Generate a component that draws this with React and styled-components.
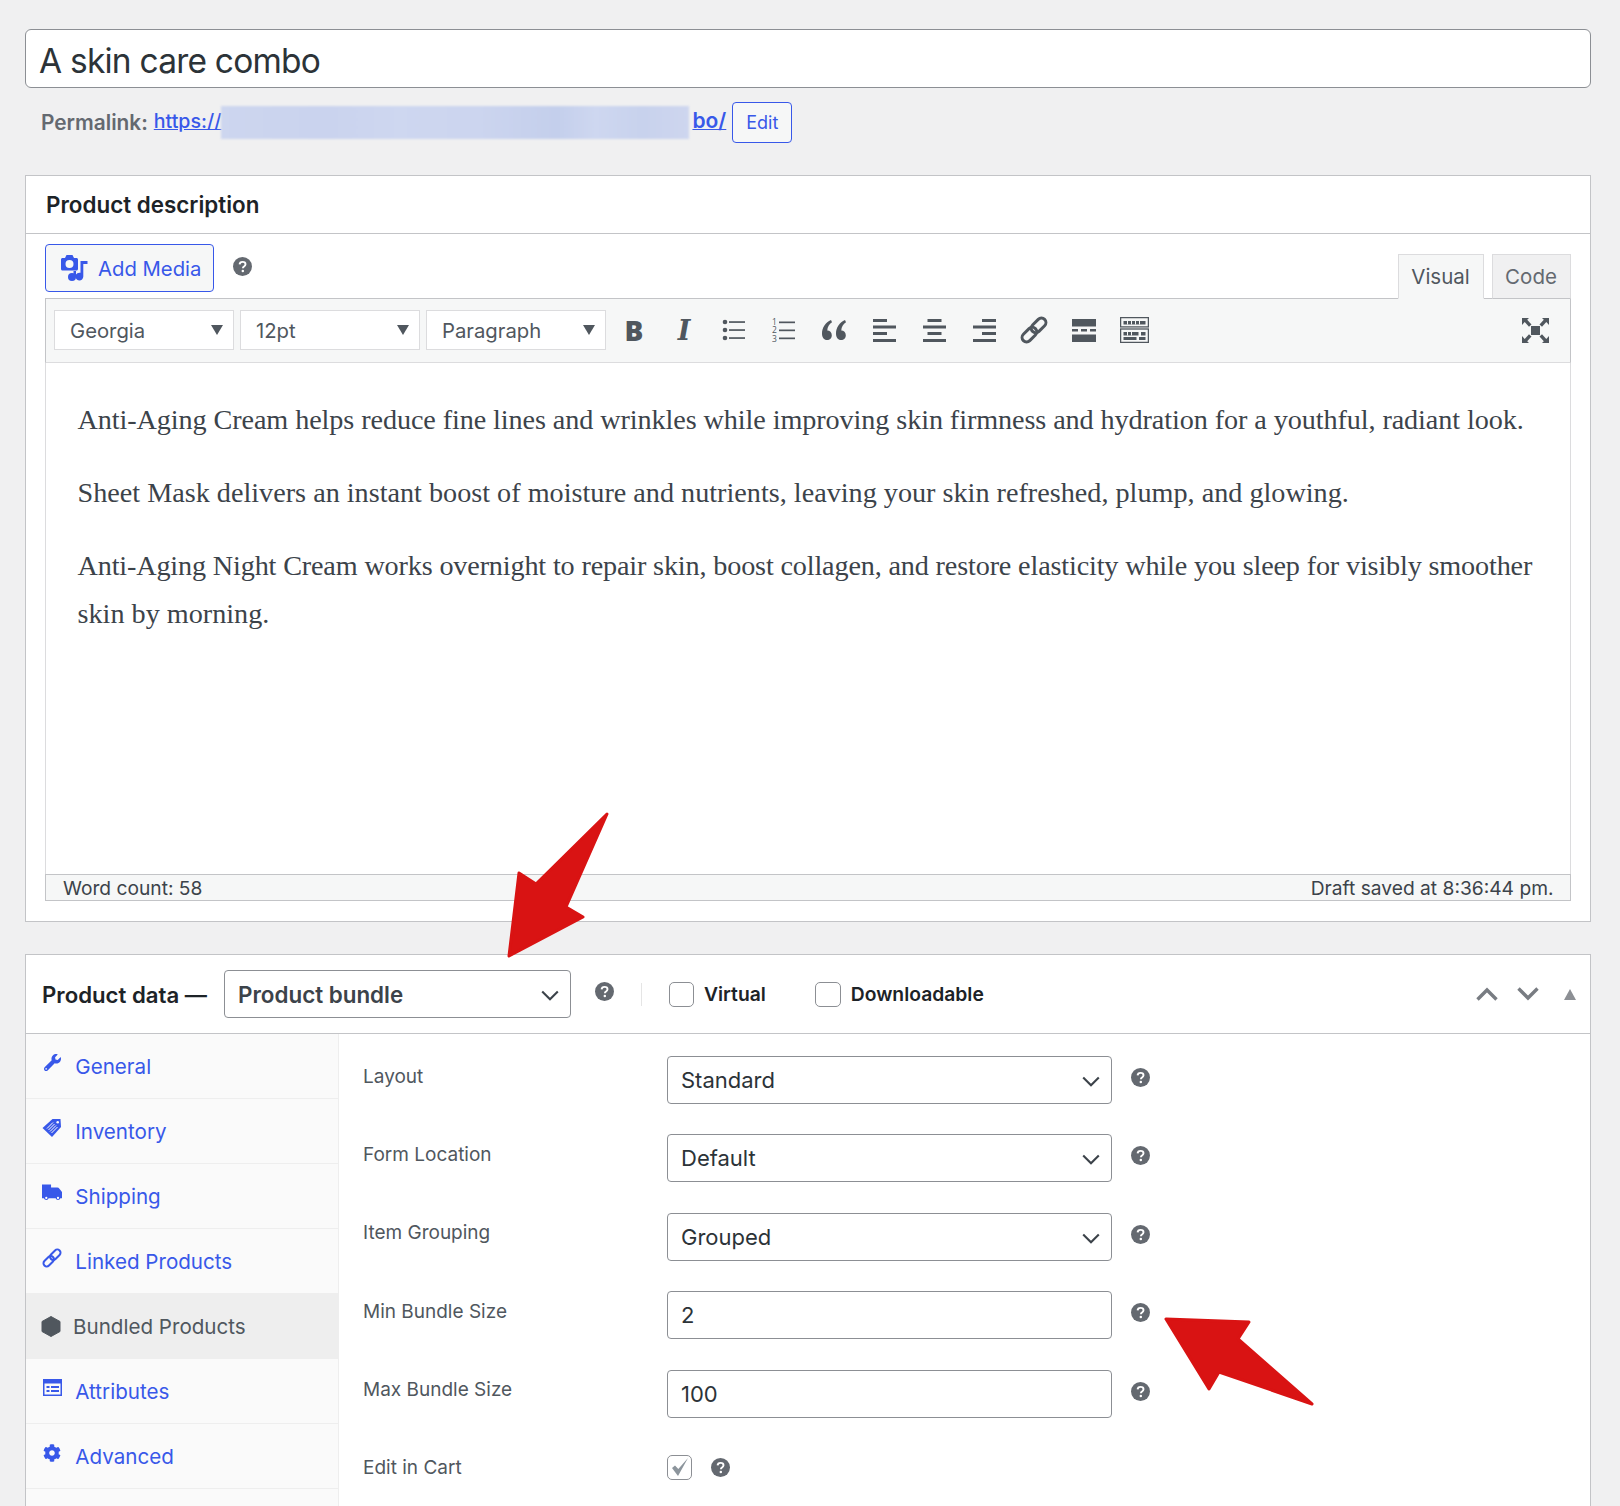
import React from "react";
import styled, { createGlobalStyle } from "styled-components";
import { FaWrench, FaCog } from "react-icons/fa";

const Global = createGlobalStyle`
  html, body { margin: 0; padding: 0; background: #f0f0f1; height: 1506px; overflow: hidden; }
  * { box-sizing: border-box; }
  body { font-family: Inter, "Noto Sans", sans-serif; color: #1d2327; }
`;

const Page = styled.div`
  position: relative;
  width: 1620px;
  height: 1506px;
  padding: 29px 29.5px 0 25px;
  overflow: hidden;
`;
const TitleField = styled.div`
  height: 59px;
  background: #fff;
  border: 1.5px solid #8c8f94;
  border-radius: 6px;
  padding-left: 13px;
  font-size: 33.5px;
  line-height: 62px;
  color: #2c3338;
  letter-spacing: -0.78px;
`;
const PermalinkRow = styled.div`
  display: flex;
  align-items: center;
  height: 41px;
  margin-top: 14px;
  padding-left: 16px;
  font-size: 19.6px;
  font-weight: 600;
  color: #646970;
`;
const PermaLabel = styled.span`
  margin-right: 6px;
  font-size: 20.8px;
`;
const PermaLink = styled.a`
  color: #3858e9;
  text-decoration: underline;
  font-weight: 500;
  white-space: nowrap;
`;
const Redacted = styled.span`
  display: inline-block;
  width: 468px;
  height: 33px;
  vertical-align: middle;
  background: linear-gradient(90deg, #cdd6ef 0%, #cad3ee 22%, #ced7f0 38%, #ccd5ef 55%, #c4cfec 72%, #ced7f0 80%, #c8d2ed 90%, #ced6ef 100%);
  filter: blur(1px);
`;
const Slug = styled.span`
  margin-left: 3px;
  font-size: 21px;
  font-weight: 600;
`;
const SmallButton = styled.button`
  margin-left: 6px;
  width: 60px;
  height: 41px;
  font: 400 18px Inter, sans-serif;
  color: #3858e9;
  background: #f6f7f7;
  border: 1.5px solid #3858e9;
  border-radius: 4px;
  padding: 0;
`;
const Box = styled.section`
  margin-top: ${(p) => p.$top}px;
  background: #fff;
  border: 1px solid #c3c4c7;
`;
const BoxHead = styled.h2`
  margin: 0;
  height: 58px;
  padding-left: 20px;
  font-size: 22.4px;
  line-height: 57px;
  font-weight: 600;
  color: #1d2327;
  border-bottom: 1px solid #c3c4c7;
`;
const EditorWrap = styled.div`
  padding: 10px 19px 20px 19px;
`;
const EditorTop = styled.div`
  display: flex;
  align-items: flex-start;
  height: 54px;
  position: relative;
`;
const AddMedia = styled.button`
  display: flex;
  align-items: center;
  gap: 9px;
  width: 169px;
  height: 48px;
  padding: 0 0 0 14px;
  font: 400 20.3px Inter, sans-serif;
  color: #3858e9;
  background: #f6f7f7;
  border: 1.5px solid #3858e9;
  border-radius: 4px;
`;
const TopHelp = styled.span`
  display: flex;
  margin: 13px 0 0 19px;
`;
const Tabs = styled.div`
  display: flex;
  gap: 8px;
  margin-left: auto;
  align-self: flex-end;
  position: relative;
  top: 1px;
  z-index: 1;
`;
const Tab = styled.div`
  height: 45px;
  width: ${(p) => p.$w}px;
  text-align: center;
  font-size: 20.5px;
  line-height: 43px;
  color: ${(p) => (p.$active ? "#50575e" : "#646970")};
  background: ${(p) => (p.$active ? "#f6f7f7" : "#f0f0f1")};
  border: 1px solid #dcdcde;
  border-bottom: ${(p) => (p.$active ? "1px solid #f6f7f7" : "1px solid #c3c4c7")};
`;
const Toolbar = styled.div`
  display: flex;
  align-items: center;
  height: 65px;
  padding: 0 9px 1px 8px;
  background: #f6f7f7;
  border: 1px solid #c3c4c7;
  border-bottom: 1px solid #dcdcde;
  gap: 6px;
`;
const ToolSelect = styled.div`
  display: flex;
  align-items: center;
  justify-content: space-between;
  width: 180px;
  height: 40px;
  padding: 0 10px 0 15px;
  background: #fff;
  border: 1px solid #dcdcde;
  font-size: 20.3px;
  color: #50575e;
`;
const Caret = styled.span`
  width: 0;
  height: 0;
  border-left: 6px solid transparent;
  border-right: 6px solid transparent;
  border-top: 10px solid #50575e;
`;
const ToolGroup = styled.div`
  display: flex;
  margin-left: -3px;
`;
const ToolBtn = styled.div`
  display: flex;
  align-items: center;
  justify-content: center;
  width: 50px;
  height: 40px;
  color: #50575e;
`;
const BoldMark = styled.span`
  font: 800 28px "Open Sans", sans-serif;
  color: #50575e;
`;
const ItalicMark = styled.span`
  font: italic 700 27px "DejaVu Serif", serif;
  color: #50575e;
`;
const FullBtn = styled(ToolBtn)`
  margin-left: auto;
`;
const EditArea = styled.div`
  height: 511px;
  padding: 33px 20px 0 31.5px;
  border-left: 1px solid #dcdcde;
  border-right: 1px solid #dcdcde;
  font-family: "Liberation Serif", serif;
  font-size: 28.2px;
  line-height: 47.5px;
  color: #3c434a;
`;
const Para = styled.p`
  margin: 0 0 25.5px;
  white-space: nowrap;
`;
const FitLine = styled.span`
  letter-spacing: ${(p) => p.$ls}px;
`;
const StatusBar = styled.div`
  display: flex;
  justify-content: space-between;
  align-items: center;
  height: 27px;
  padding: 0 16px 0 17px;
  background: #f6f7f7;
  border: 1px solid #c3c4c7;
  font-size: 19.2px;
  color: #3c434a;
`;
const DataHead = styled.div`
  display: flex;
  align-items: center;
  height: 79px;
  padding: 0 13.5px 0 16px;
  border-bottom: 1px solid #c3c4c7;
`;
const DataTitle = styled.span`
  font-size: 22.2px;
  font-weight: 600;
  color: #1d2327;
  white-space: nowrap;
  width: 166px;
  flex: none;
`;
const Select = styled.div`
  display: flex;
  align-items: center;
  justify-content: space-between;
  flex: none;
  width: ${(p) => p.$w}px;
  height: 48px;
  padding: 0 11px 0 13px;
  margin-left: ${(p) => p.$ml || 0}px;
  background: #fff;
  border: 1.5px solid #8c8f94;
  border-radius: 4px;
  font-size: ${(p) => (p.$strong ? 22.4 : 22)}px;
  font-weight: ${(p) => (p.$strong ? 600 : 400)};
  color: ${(p) => (p.$strong ? "#3c434a" : "#2c3338")};
`;
const HeadHelp = styled.span`
  display: flex;
  margin: -5px 0 0 24px;
`;
const Divider = styled.span`
  width: 1px;
  height: 23px;
  margin: 0 27px;
  background: #e5e5e5;
`;
const CheckBox = styled.span`
  display: flex;
  align-items: center;
  justify-content: center;
  flex: none;
  width: ${(p) => p.$w || 25}px;
  height: 25px;
  background: #fff;
  border: 1.2px solid #8c8f94;
  border-radius: 5px;
`;
const CheckLabel = styled.span`
  margin: 0 49px 0 10px;
  font-size: 19.3px;
  font-weight: 600;
  color: #1d2327;
`;
const HeadControls = styled.div`
  display: flex;
  align-items: center;
  margin-left: auto;
`;
const ChevronBtn = styled.span`
  display: flex;
  margin-right: 19px;
`;
const CollapseTri = styled.span`
  margin-left: 6px;
  width: 0;
  height: 0;
  border-left: 6.5px solid transparent;
  border-right: 6.5px solid transparent;
  border-bottom: 11px solid #8c8f94;
`;
const DataBody = styled.div`
  display: grid;
  grid-template-columns: 313px 1fr;
  height: 480px;
`;
const Side = styled.ul`
  list-style: none;
  margin: 0;
  padding: 0;
  background: #fafafa;
  border-right: 1px solid #eee;
`;
const SideItem = styled.li`
  display: flex;
  align-items: center;
  height: 65px;
  padding: 1px 0 0 ${(p) => (p.$active ? 15 : 16)}px;
  background: ${(p) => (p.$active ? "#eee" : "transparent")};
  border-bottom: 1px solid #eeeeee;
  font-size: 20.6px;
  color: ${(p) => (p.$active ? "#50575e" : "#3858e9")};
`;
const SideIcon = styled.span`
  display: flex;
  justify-content: center;
  width: 20px;
  margin: ${(p) => (p.$active ? "0 12px 0 0" : "-8px 13.3px 0 0")};
  font-size: 18px;
`;
const Panel = styled.div`
  padding: 22px 0 0 24px;
`;
const Row = styled.div`
  display: grid;
  grid-template-columns: 304px 445px 1fr;
  height: 78.4px;
`;
const Label = styled.div`
  font-size: 19px;
  line-height: 24px;
  padding-top: 8.5px;
  color: #50575e;
`;
const TextField = styled.div`
  height: 48px;
  padding-left: 13px;
  background: #fff;
  border: 1.5px solid #8c8f94;
  border-radius: 4px;
  font-size: 22px;
  line-height: 46px;
  color: #2c3338;
`;
const RowHelp = styled.span`
  display: flex;
  margin: 12px 0 0 19px;
`;
const CheckCell = styled.div`
  display: flex;
  align-items: center;
  gap: 19px;
  height: 25px;
  margin-top: 7px;
`;
const Overlay = styled.svg`
  position: absolute;
  left: 0;
  top: 0;
  pointer-events: none;
`;

const Help = () => (
  <svg width="19" height="19" viewBox="0 0 19 19">
    <circle cx="9.5" cy="9.5" r="9.5" fill="#646970" />
    <path d="M6.6 7.4c.1-1.6 1.3-2.5 3-2.5s2.9.9 2.9 2.3c0 1.2-.7 1.7-1.5 2.3-.8.5-1.1.9-1.1 1.7" fill="none" stroke="#fff" strokeWidth="1.9" />
    <circle cx="9.8" cy="14" r="1.25" fill="#fff" />
  </svg>
);
const Chevron = () => (
  <svg width="18" height="11" viewBox="0 0 18 11" style={{ marginTop: 3 }}>
    <path d="M1.2 1.400 9 9.200l7.800-7.800" fill="none" stroke="#3c434a" strokeWidth="2.100" />
  </svg>
);
const MediaIcon = () => (
  <svg width="29" height="28" viewBox="0 0 29 28" fill="#3858e9">
    <path fillRule="evenodd" d="M1 5.500C1 4.700 1.700 4 2.500 4H5l1.500-3h6L14 4h2.500c.8 0 1.500.7 1.500 1.500V15c0 .8-.7 1.500-1.500 1.500h-14C1.700 16.500 1 15.800 1 15zM9.500 6a4 4 0 1 0 0 8 4 4 0 0 0 0-8z" />
    <path d="M20.500 7h7v3h-4.200v12.500a3.900 3.900 0 1 1-2.800-3.700z" />
    <circle cx="12" cy="23" r="4" />
    <path d="M13.500 17h2.500v6h-2.500z" />
  </svg>
);
const Ul = () => (
  <svg width="24" height="24" viewBox="0 0 24 24" fill="#50575e">
    <circle cx="3" cy="4" r="2.300" /><circle cx="3" cy="12" r="2.300" /><circle cx="3" cy="20" r="2.300" />
    <rect x="7" y="3.200" width="16" height="1.700" /><rect x="7" y="11.200" width="16" height="1.700" /><rect x="7" y="19.200" width="16" height="1.700" />
  </svg>
);
const Ol = () => (
  <svg width="24" height="26" viewBox="0 0 24 26" fill="#50575e">
    <text x="0" y="8" fontSize="8.500" fontFamily="Open Sans">1</text>
    <text x="0" y="16" fontSize="8.500" fontFamily="Open Sans">2</text>
    <text x="0" y="24.500" fontSize="8.500" fontFamily="Open Sans">3</text>
    <rect x="7" y="4.500" width="16" height="1.700" /><rect x="7" y="12.500" width="16" height="1.700" /><rect x="7" y="20.500" width="16" height="1.700" />
  </svg>
);
const Quote = () => (
  <svg width="26" height="22" viewBox="0 0 26 22" fill="#50575e">
    <path d="M10 1C4.500 3.500 1 8.500 1 14.500 1 18.500 3 21 6 21s4.800-2.100 4.800-4.800-2-4.600-4.500-4.600c0-3.500 2-6.600 4.700-8.400z" />
    <path d="M24 1C18.500 3.500 15 8.500 15 14.500c0 4 2 6.500 5 6.500s4.800-2.100 4.800-4.800-2-4.600-4.500-4.600c0-3.500 2-6.600 4.700-8.400z" />
  </svg>
);
const Align = ({ kind }) => {
  const x = (w) => (kind === "l" ? 0 : kind === "c" ? (23 - w) / 2 : 23 - w);
  return (
    <svg width="23" height="23" viewBox="0 0 23 23" fill="#50575e">
      <rect x={x(14)} y="0" width="14" height="3" />
      <rect x={x(23)} y="6.500" width="23" height="3" />
      <rect x={x(14)} y="13" width="14" height="3" />
      <rect x={x(23)} y="20" width="23" height="3" />
    </svg>
  );
};
const ChainIcon = ({ size = 28, color = "#50575e", sw = 3 }) => (
  <svg width={size} height={size} viewBox="0 0 28 28" fill="none" stroke={color} strokeWidth={sw}>
    <g transform="rotate(-45 14 14)">
      <rect x="-1" y="9.500" width="17" height="9" rx="4.500" />
      <rect x="12" y="9.500" width="17" height="9" rx="4.500" />
    </g>
  </svg>
);
const More = () => (
  <svg width="24" height="23" viewBox="0 0 24 23" fill="#50575e">
    <rect x="0" y="0" width="24" height="7.500" />
    <rect x="0" y="10" width="6" height="2.500" /><rect x="9" y="10" width="6" height="2.500" /><rect x="18" y="10" width="6" height="2.500" />
    <rect x="0" y="15.500" width="24" height="7.500" />
  </svg>
);
const Kitchen = () => (
  <svg width="29" height="26" viewBox="0 0 29 26" fill="none">
    <rect x=".6" y=".6" width="27.800" height="9.300" stroke="#50575e" strokeWidth="1.300" />
    <rect x=".6" y="12" width="27.800" height="13.400" stroke="#50575e" strokeWidth="1.300" />
    <path d="M3.500 4h22v3.500h-22zM3.500 15h15v3.500h-15zM21 15h4.500v3.500H21zM3.500 20h13v3h-13zM19 20h6.500v3H19z" fill="#50575e" />
    <path d="M7.500 4v3.500M11.500 4v3.500M15.500 4v3.500M19.500 4v3.500M7.500 15v3.500M11.500 15v3.500" stroke="#f6f7f7" strokeWidth="1" />
  </svg>
);
const Fullscreen = () => (
  <svg width="27" height="25" viewBox="0 0 27 25" fill="#50575e">
    <rect x="9" y="8" width="9" height="9" />
    <path d="M0 0h7L5.200 1.800 9.500 6.500 7 8.800 2.700 4 0 7zM27 0h-7l1.800 1.800L17.500 6.500 20 8.800 24.300 4 27 7zM0 25h7l-1.800-1.800 4.300-4.700L7 16.200 2.700 21 0 18zM27 25h-7l1.800-1.800-4.300-4.700 2.500-2.300 4.300 4.800 2.700-3z" />
  </svg>
);
const ChevUp = ({ flip }) => (
  <svg width="22" height="14" viewBox="0 0 22 14" style={flip ? { transform: "scaleY(-1)" } : undefined}>
    <path d="M1.500 12.500 11 3l9.500 9.500" fill="none" stroke="#787c82" strokeWidth="3.400" />
  </svg>
);
const TagIcon = () => (
  <svg width="20" height="20" viewBox="0 0 20 20">
    <path d="M10.500 1h8l.5 8-9 10-9.500-9z" fill="#3858e9" />
    <path d="M5 10.500 11 4.500M6.500 12 12.500 6M8 13.500 14 7.500M9.500 15 15.500 9" stroke="#fafafa" strokeWidth="1" />
    <circle cx="15.700" cy="4.300" r="1.300" fill="#fafafa" />
  </svg>
);
const TruckIcon = () => (
  <svg width="21" height="17" viewBox="0 0 21 17" fill="#3858e9">
    <path fillRule="evenodd" d="M0 0h9.500v3.300H16c1 0 1.800.4 2.300 1.200L21 8v6.500h-1.700a2.600 2.600 0 0 1-5 0H7a2.600 2.600 0 0 1-5 0H0z" />
    <circle cx="4.500" cy="14.200" r="1.200" fill="#fff" />
    <circle cx="16.800" cy="14.200" r="1.200" fill="#fff" />
  </svg>
);
const AttrIcon = () => (
  <svg width="19" height="17" viewBox="0 0 19 17">
    <rect width="19" height="17" fill="#3858e9" />
    <rect x="1.500" y="4.500" width="16" height="11" fill="#fafafa" />
    <path d="M3.500 7h3v2h-3zM8 7h8v2H8zM3.500 11h3v2h-3zM8 11h8v2H8z" fill="#3858e9" />
  </svg>
);
const Hex = () => (
  <svg width="20" height="21" viewBox="0 0 20 21">
    <path d="M10 .500 19 5.500v10l-9 5-9-5v-10z" fill="#50575e" stroke="#50575e" strokeLinejoin="round" />
  </svg>
);

const navItems = [
  ["General", <FaWrench key="w" color="#3858e9" size={17} />],
  ["Inventory", <TagIcon key="t" />],
  ["Shipping", <TruckIcon key="s" />],
  ["Linked Products", <ChainIcon key="c" size={20} color="#3858e9" sw={2.800} />],
  ["Bundled Products", <Hex key="h" />, true],
  ["Attributes", <AttrIcon key="a" />],
  ["Advanced", <FaCog key="g" color="#3858e9" size={18} />],
  ["", null],
];

export default function App() {
  return (
    <Page>
      <Global />
      <TitleField>A skin care combo</TitleField>
      <PermalinkRow>
        <PermaLabel>Permalink:</PermaLabel>
        <PermaLink>https://<Redacted /><Slug>bo/</Slug></PermaLink>
        <SmallButton>Edit</SmallButton>
      </PermalinkRow>

      <Box $top={32}>
        <BoxHead>Product description</BoxHead>
        <EditorWrap>
          <EditorTop>
            <AddMedia><MediaIcon />Add Media</AddMedia>
            <TopHelp><Help /></TopHelp>
            <Tabs>
              <Tab $w={86} $active>Visual</Tab>
              <Tab $w={79}>Code</Tab>
            </Tabs>
          </EditorTop>
          <Toolbar>
            <ToolSelect>Georgia<Caret /></ToolSelect>
            <ToolSelect>12pt<Caret /></ToolSelect>
            <ToolSelect>Paragraph<Caret /></ToolSelect>
            <ToolGroup>
              <ToolBtn><BoldMark>B</BoldMark></ToolBtn>
              <ToolBtn><ItalicMark>I</ItalicMark></ToolBtn>
              <ToolBtn><Ul /></ToolBtn>
              <ToolBtn><Ol /></ToolBtn>
              <ToolBtn><Quote /></ToolBtn>
              <ToolBtn><Align kind="l" /></ToolBtn>
              <ToolBtn><Align kind="c" /></ToolBtn>
              <ToolBtn><Align kind="r" /></ToolBtn>
              <ToolBtn><ChainIcon /></ToolBtn>
              <ToolBtn><More /></ToolBtn>
              <ToolBtn><Kitchen /></ToolBtn>
            </ToolGroup>
            <FullBtn><Fullscreen /></FullBtn>
          </Toolbar>
          <EditArea>
            <Para><FitLine $ls={-0.09}>Anti-Aging Cream helps reduce fine lines and wrinkles while improving skin firmness and hydration for a youthful, radiant look.</FitLine></Para>
            <Para>Sheet Mask delivers an instant boost of moisture and nutrients, leaving your skin refreshed, plump, and glowing.</Para>
            <Para><FitLine $ls={-0.155}>Anti-Aging Night Cream works overnight to repair skin, boost collagen, and restore elasticity while you sleep for visibly smoother</FitLine><br />skin by morning.</Para>
          </EditArea>
          <StatusBar>
            <span>Word count: 58</span>
            <span>Draft saved at 8:36:44 pm.</span>
          </StatusBar>
        </EditorWrap>
      </Box>

      <Box $top={32}>
        <DataHead>
          <DataTitle>Product data —</DataTitle>
          <Select $w={347} $ml={16} $strong>Product bundle<Chevron /></Select>
          <HeadHelp><Help /></HeadHelp>
          <Divider />
          <CheckBox />
          <CheckLabel>Virtual</CheckLabel>
          <CheckBox $w={26} />
          <CheckLabel>Downloadable</CheckLabel>
          <HeadControls>
            <ChevronBtn><ChevUp /></ChevronBtn>
            <ChevronBtn><ChevUp flip /></ChevronBtn>
            <CollapseTri />
          </HeadControls>
        </DataHead>
        <DataBody>
          <Side>
            {navItems.map(([label, icon, active], i) => (
              <SideItem key={i} $active={active}>
                <SideIcon $active={active}>{icon}</SideIcon>
                {label}
              </SideItem>
            ))}
          </Side>
          <Panel>
            <Row>
              <Label>Layout</Label>
              <Select $w={445}>Standard<Chevron /></Select>
              <RowHelp><Help /></RowHelp>
            </Row>
            <Row>
              <Label>Form Location</Label>
              <Select $w={445}>Default<Chevron /></Select>
              <RowHelp><Help /></RowHelp>
            </Row>
            <Row>
              <Label>Item Grouping</Label>
              <Select $w={445}>Grouped<Chevron /></Select>
              <RowHelp><Help /></RowHelp>
            </Row>
            <Row>
              <Label>Min Bundle Size</Label>
              <TextField>2</TextField>
              <RowHelp><Help /></RowHelp>
            </Row>
            <Row>
              <Label>Max Bundle Size</Label>
              <TextField>100</TextField>
              <RowHelp><Help /></RowHelp>
            </Row>
            <Row>
              <Label>Edit in Cart</Label>
              <CheckCell>
                <CheckBox>
                  <svg width="20" height="22" viewBox="0 0 20 22">
                    <path d="M2 12 8 20 18 2 8.300 13 5 9.500z" fill="#8c959c" />
                  </svg>
                </CheckBox>
                <Help />
              </CheckCell>
            </Row>
          </Panel>
        </DataBody>
      </Box>

      <Overlay width="1620" height="1506" viewBox="0 0 1620 1506">
        <path d="M607 814 566 907 583 917 509 956 519 873 536 884z" fill="#d91313" stroke="#d91313" strokeWidth="3" strokeLinejoin="round" />
        <path d="M1166 1319 1249 1322 1238 1339 1312 1404 1219 1372 1209 1389z" fill="#d91313" stroke="#d91313" strokeWidth="3" strokeLinejoin="round" />
      </Overlay>
    </Page>
  );
}
